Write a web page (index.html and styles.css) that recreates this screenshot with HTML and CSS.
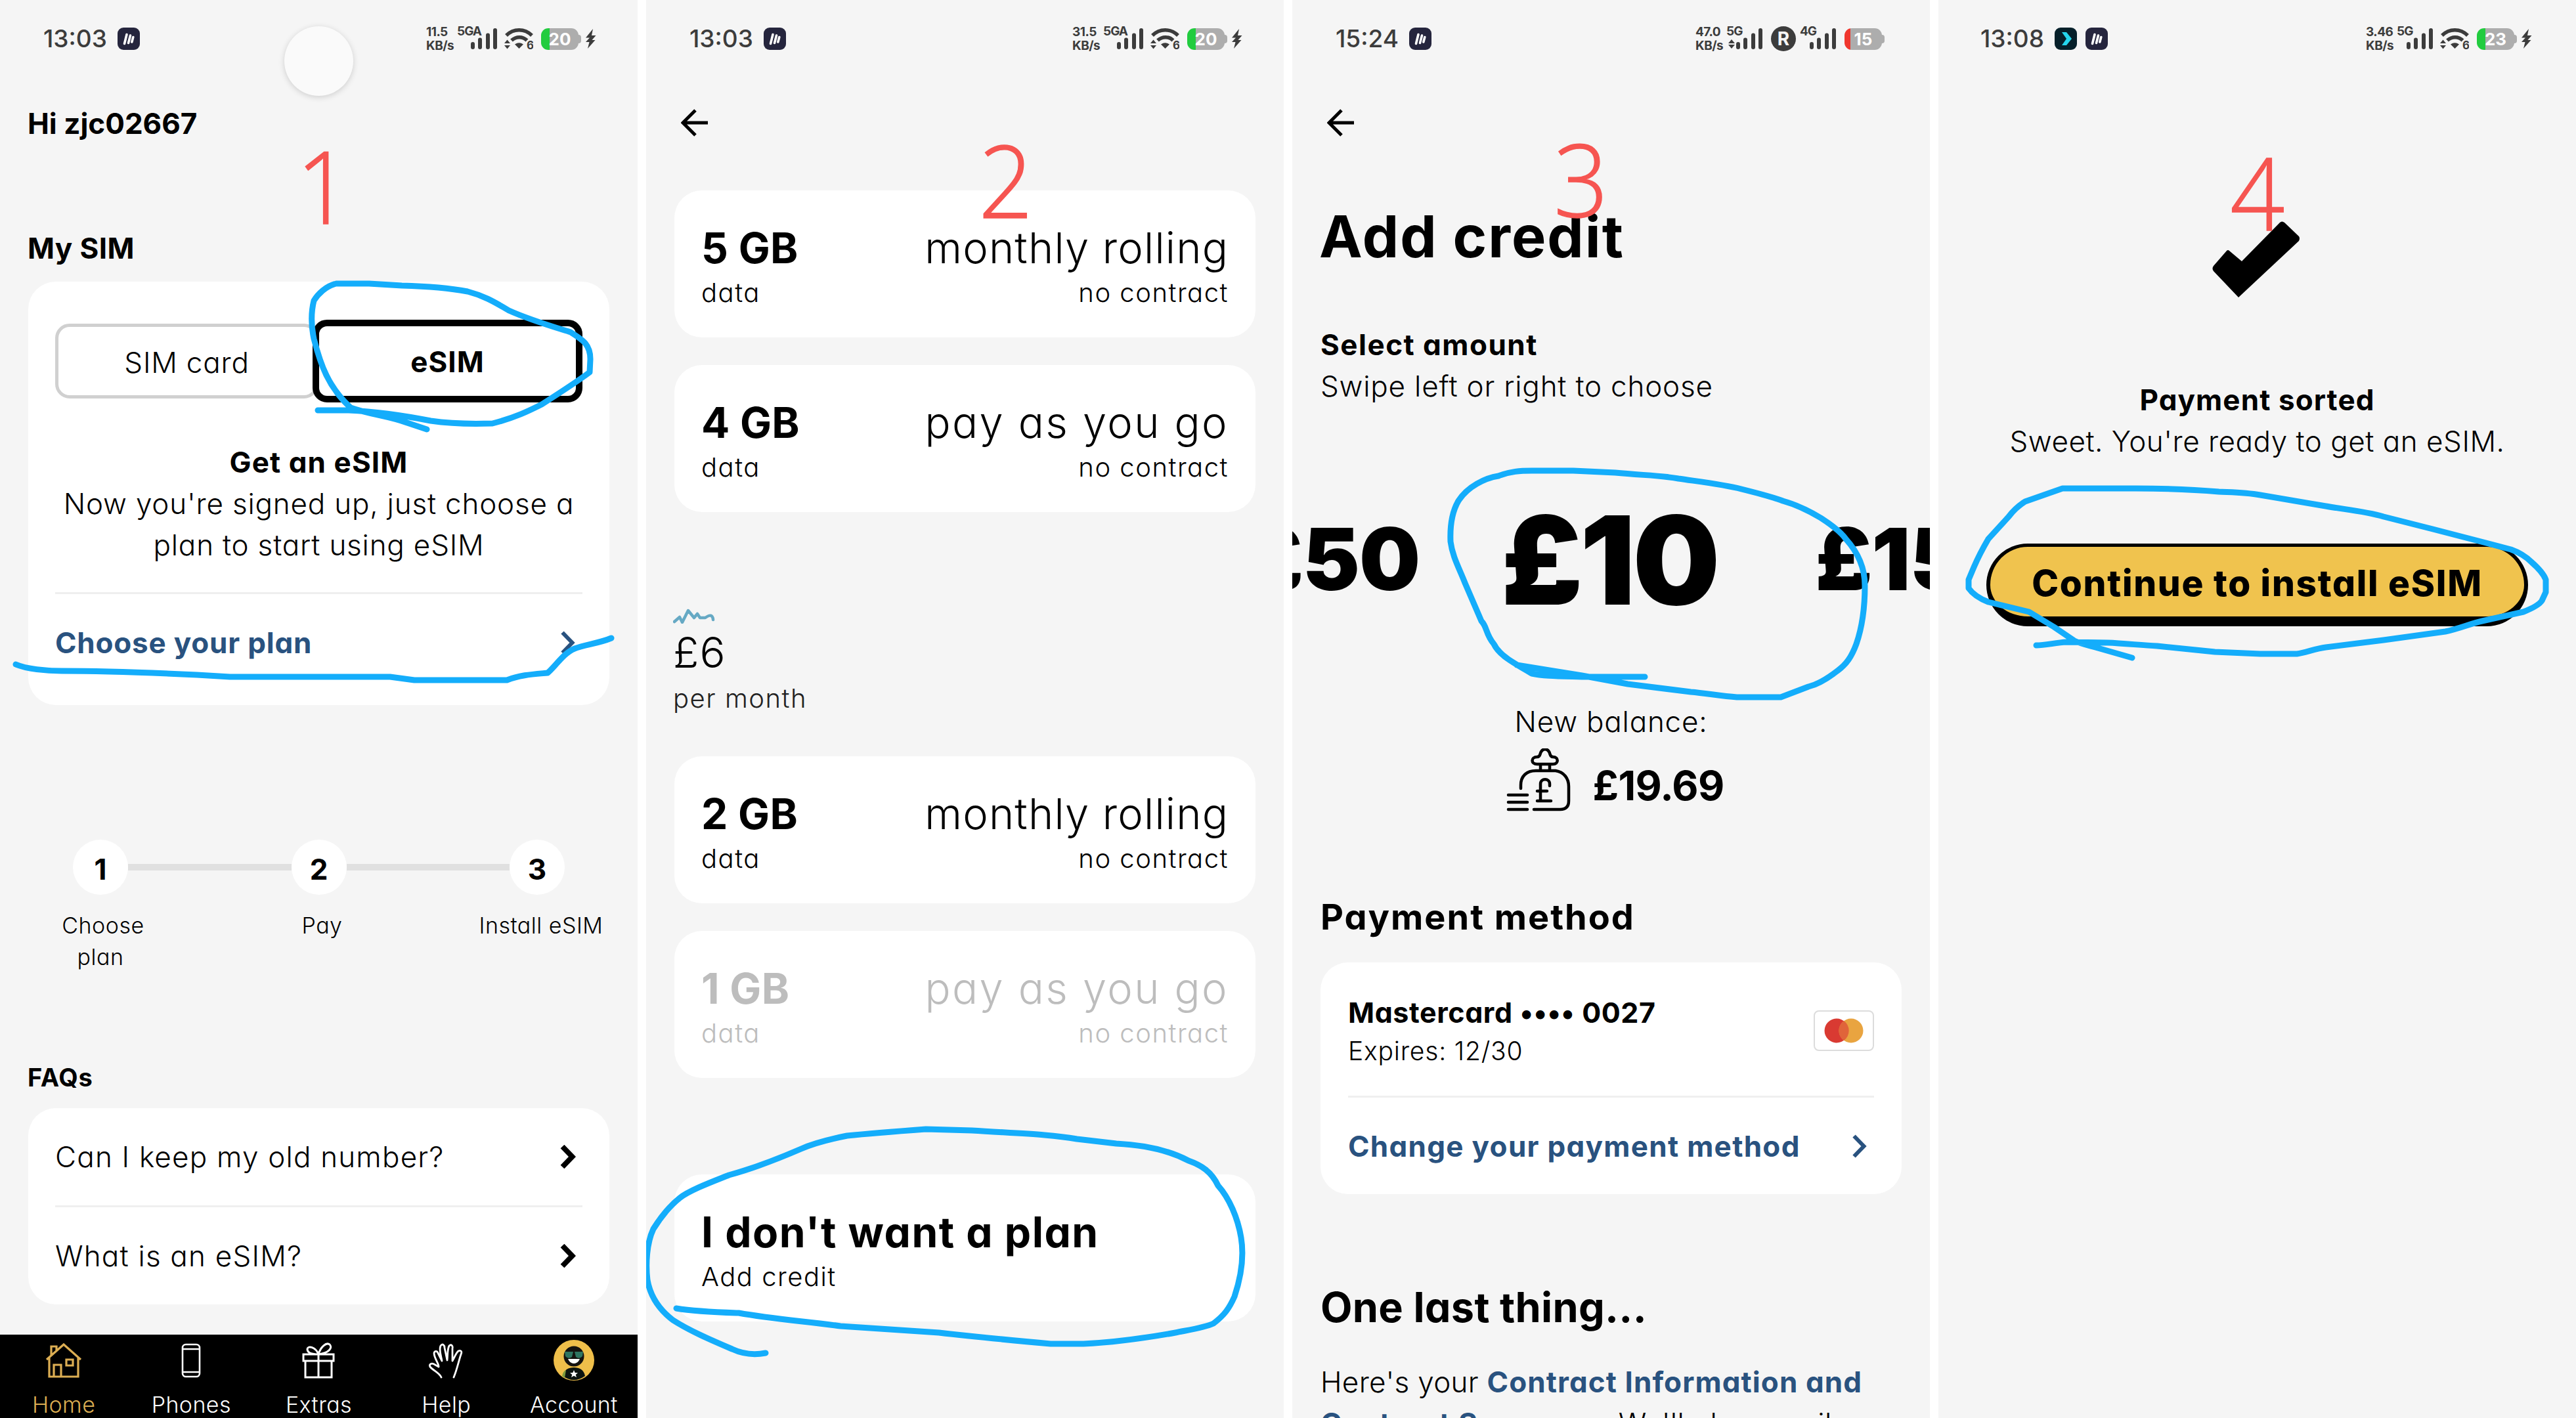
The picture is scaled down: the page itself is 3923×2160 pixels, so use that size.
FILE: index.html
```html
<!DOCTYPE html>
<html lang="en">
<head>
  <meta charset="UTF-8">
  <title>eSIM sign up steps</title>
  <meta name="viewport" content="width=device-width, initial-scale=1">
  <link rel="stylesheet" href="styles.css">
</head>
<body>
  <!-- shared icons -->
  <svg class="defs" aria-hidden="true">
    <symbol id="app" viewBox="0 0 34 34">
      <rect width="34" height="34" rx="9" fill="#25253d"/>
      <path d="M10.500 24.500 14 10.500M16.500 23.500 19.500 12M21.800 22 23.800 14.500" stroke="#fff" stroke-width="3.600" stroke-linecap="round"/>
    </symbol>
    <symbol id="bars" viewBox="0 0 40 32">
      <path d="M3 24V29M14 17.500V29M26 10.500V29M37 3V29" stroke="#3c3c3c" stroke-width="6" stroke-linecap="round"/>
    </symbol>
    <symbol id="wifi" viewBox="0 0 44 34">
      <path d="M3 12C14 1 31 1 42 12M11 19.500C18 13 28 13 34.500 19.500" fill="none" stroke="#3c3c3c" stroke-width="5.500"/>
      <path d="M16 25.500Q22.500 21 29 25.500L22.500 32Z M0 24 4.500 18.500 9 24Z M0 27 4.500 32.500 9 27Z" fill="#3c3c3c"/>
      <text x="34" y="33" class="tiny">6</text>
    </symbol>
    <symbol id="bolt" viewBox="0 0 17 30">
      <path d="M12 0 1 13.500H7L1 20H6.500L4 30 15.500 17H10.500L16.500 10H10Z" fill="#3c3c3c"/>
    </symbol>
    <symbol id="arrow" viewBox="0 0 42 42">
      <path d="M22 2 3 21 22 40M3 21H41" fill="none" stroke="#000" stroke-width="5"/>
    </symbol>
    <symbol id="chevron" viewBox="0 0 24 36">
      <path d="M3.500 2.500 18.500 18 3.500 33.500" fill="none" stroke="currentColor"/>
    </symbol>
  </svg>

  <div class="board">

    <!-- 1: home -->
    <section class="screen">
      <div class="status">
        <span class="time">13:03</span>
        <svg class="app"><use href="#app"/></svg>
        <span class="speed">11.5<br>KB/s</span>
        <span class="signal signal-5ga"><b>5GA</b><svg><use href="#bars"/></svg></span>
        <svg class="wifi"><use href="#wifi"/></svg>
        <span class="battery green">20</span>
        <svg class="bolt"><use href="#bolt"/></svg>
      </div>
      <span class="camera"></span>

      <h2 class="hello">Hi zjc02667</h2>
      <h2 class="my-sim">My SIM</h2>

      <div class="card sim-card">
        <div class="segment">
          <div class="option">SIM card</div>
          <div class="option active">eSIM</div>
        </div>
        <p class="bold center">Get an eSIM</p>
        <p class="center">Now you're signed up, just choose a<br>plan to start using eSIM</p>
        <hr class="sim-rule">
        <a class="row link">Choose your plan<svg class="chevron"><use href="#chevron"/></svg></a>
      </div>

      <div class="steps">
        <b>1</b><i></i><b>2</b><i></i><b>3</b>
      </div>
      <div class="step-labels">
        <span>Choose<br><span class="step-plan">plan</span></span>
        <span class="step-pay">Pay</span>
        <span>Install eSIM</span>
      </div>

      <h3 class="faq-title">FAQs</h3>
      <div class="card faq">
        <div class="row">Can I keep my old number?<svg class="chevron"><use href="#chevron"/></svg></div>
        <hr>
        <div class="row">What is an eSIM?<svg class="chevron"><use href="#chevron"/></svg></div>
      </div>

      <nav class="tabs">
        <a class="tab current">
          <svg viewBox="0 0 56 56" fill="none" stroke="currentColor" stroke-width="3.200"><path d="M2 27 28 4 54 27M6 24V53H50V24M9 20V7H17V13M13 53V35H24V53M32 27H42V36H32Z"/></svg>
          Home
        </a>
        <a class="tab">
          <svg viewBox="0 0 56 56" fill="none" stroke="currentColor" stroke-width="2.600"><rect x="15" y="4" width="26" height="49" rx="5"/><path d="M15 11H41M15 46H41"/></svg>
          Phones
        </a>
        <a class="tab">
          <svg viewBox="0 0 56 56" fill="none" stroke="currentColor" stroke-width="3"><path d="M5 19H51V29H5ZM8 29V54H48V29M28 19V54M28 19C19 19 11 17 11 11 12 5 24 8 28 19 31 8 40 0 45 4 50 9 44 17 28 19Z"/></svg>
          Extras
        </a>
        <a class="tab">
          <svg viewBox="0 0 56 56" fill="none" stroke="currentColor" stroke-width="2.800" stroke-linecap="round" stroke-linejoin="round"><path d="M20 54C17 47 8 44 3 38 1 34 5 32 9 34L16 38C17 34 9 25 9 17 10 13 14 14 15 17L21 29C20 22 16 12 19 6 22 2 25 5 25 9L29 28C30 20 29 12 32 6 35 3 38 6 37 10L37 29C40 24 43 16 46 14 50 12 52 15 50 19 46 31 44 42 39 54"/></svg>
          Help
        </a>
        <a class="tab">
          <svg class="avatar" viewBox="0 0 62 62">
            <circle cx="31" cy="31" r="31" fill="#efbf4a"/>
            <path d="M14 55C16 45 23 42 31 42S46 45 48 55Q31 67 14 55Z" fill="#0c1410"/>
            <path d="M13 55C14 50 16 47 19 46L17 58Z" fill="#7f9a3c"/>
            <circle cx="31" cy="25" r="15.500" fill="#15130f"/>
            <path d="M17 18H30L28 26Q23 30 18 25ZM32 18H45L44 25Q39 30 34 26Z" fill="#2f7561"/>
            <path d="M22 29H40Q37 36 31 36T22 29Z" fill="#fff"/>
            <path d="M31 46 32.700 50 37 50.200 33.700 53 35 57 31 54.700 27 57 28.300 53 25 50.200 29.300 50Z" fill="#fff"/>
          </svg>
          Account
        </a>
      </nav>

      <svg class="marker" viewBox="0 0 971 2160">
        <path d="M484 625H531C575 627 615 633 656 641 690 646 720 646 750 645 785 636 805 626 825 616 850 600 878 582 898 567L899 547C899 525 888 518 869 506 840 497 806 487 775 473 750 458 735 450 712 444 680 438 648 436 612 435L562 432H512C496 436 484 448 478 458 473 478 474 497 478 516 488 555 500 590 534 621 565 632 590 633 620 644L650 654"/>
        <path d="M24 1012C40 1019 70 1022 94 1022 160 1022 235 1025 300 1028L350 1031H594L631 1036H772C792 1028 812 1027 834 1025 846 1015 858 995 875 988 890 982 912 980 931 972"/>
      </svg>
      <span class="number n1">1</span>
    </section>

    <!-- 2: plans -->
    <section class="screen">
      <div class="status">
        <span class="time">13:03</span>
        <svg class="app"><use href="#app"/></svg>
        <span class="speed">31.5<br>KB/s</span>
        <span class="signal signal-5ga"><b>5GA</b><svg><use href="#bars"/></svg></span>
        <svg class="wifi"><use href="#wifi"/></svg>
        <span class="battery green">20</span>
        <svg class="bolt"><use href="#bolt"/></svg>
      </div>
      <div class="back"><svg><use href="#arrow"/></svg></div>

      <div class="card plan">
        <div><strong>5 GB</strong><small>data</small></div>
        <div class="term"><em>monthly rolling</em><small>no contract</small></div>
      </div>
      <div class="card plan">
        <div><strong>4 GB</strong><small>data</small></div>
        <div class="term payg"><em>pay as you go</em><small>no contract</small></div>
      </div>

      <div class="price">
        <svg class="squiggle" viewBox="0 0 64 23"><path d="M2 20 10 13 14 21 23 3 32 14 37 8 41 14 49 14Q60 6 61 17" fill="none" stroke="#66a9c4" stroke-width="4.500" stroke-linecap="round" stroke-linejoin="round"/></svg>
        <em>£6</em>
        <small>per month</small>
      </div>

      <div class="card plan">
        <div><strong>2 GB</strong><small>data</small></div>
        <div class="term"><em>monthly rolling</em><small>no contract</small></div>
      </div>
      <div class="card plan sold-out">
        <div><strong>1 GB</strong><small>data</small></div>
        <div class="term payg"><em>pay as you go</em><small>no contract</small></div>
      </div>

      <div class="card plan no-plan">
        <div><strong>I don't want a plan</strong><small>Add credit</small></div>
      </div>

      <svg class="marker" viewBox="984 0 971 2160">
        <path d="M1030 1993C1060 1998 1095 1999 1125 2000 1175 2009 1230 2013 1280 2020L1430 2030C1490 2037 1545 2042 1600 2047H1650C1695 2045 1745 2038 1790 2030 1815 2025 1835 2022 1848 2016 1865 2003 1872 1993 1880 1975 1890 1945 1895 1915 1890 1885 1885 1855 1872 1825 1855 1806 1845 1785 1830 1775 1810 1768 1780 1752 1740 1744 1700 1742L1640 1735C1600 1728 1560 1727 1480 1722L1410 1720C1370 1723 1330 1726 1290 1730 1260 1736 1240 1741 1220 1750 1190 1763 1150 1779 1110 1790 1085 1800 1050 1813 1035 1825 1020 1837 1005 1856 995 1872 985 1893 983 1925 986 1950 991 1978 1008 1998 1025 2011 1050 2027 1080 2040 1115 2055 1130 2062 1145 2065 1166 2061"/>
      </svg>
      <span class="number n2">2</span>
    </section>

    <!-- 3: add credit -->
    <section class="screen">
      <div class="status">
        <span class="time">15:24</span>
        <svg class="app"><use href="#app"/></svg>
        <span class="speed">47.0<br>KB/s</span>
        <span class="signal"><b>5G</b><svg viewBox="0 0 10 14" class="updown"><path d="M0 6 5 0 10 6ZM0 8 5 14 10 8Z" fill="#3c3c3c"/></svg><svg><use href="#bars"/></svg></span>
        <span class="roaming">R</span>
        <span class="signal"><b>4G</b><svg><use href="#bars"/></svg></span>
        <span class="battery red">15</span>
      </div>
      <div class="back"><svg><use href="#arrow"/></svg></div>

      <h1>Add credit</h1>
      <p class="bold select">Select amount</p>
      <p>Swipe left or right to choose</p>

      <div class="amounts">
        <span>£50</span>
        <b>£10</b>
        <span>£15</span>
      </div>

      <p class="center balance-label">New balance:</p>
      <div class="balance">
        <svg viewBox="0 0 98 96" fill="none" stroke="#000" stroke-width="4.500" stroke-linecap="round" stroke-linejoin="round">
          <path d="M22 61V56C22 42 31 34 45 34H75C88 36 95 46 95 58V80C95 89 90 93 82 93H42M52 33V25M66 33V25M47 24H71C80 24 80 13 71 13 66 13 67 8 65 5 62 0 56 0 53 5 51 8 52 13 47 13 37 13 37 24 47 24M3 71H32M3 82H32M3 93H32"/>
          <path d="M66 57V54C66 45 52 45 52 54V78M47 65H62M47 80H68"/>
        </svg>
        <strong>£19.69</strong>
      </div>

      <h2 class="pay-title">Payment method</h2>
      <div class="card pay">
        <div class="pay-top">
          <div>
            <p class="bold brand">Mastercard •••• 0027</p>
            <p class="expires">Expires: 12/30</p>
          </div>
          <svg class="mc" viewBox="0 0 92 62">
            <rect x="1" y="1" width="90" height="60" rx="7" fill="#fff" stroke="#dcdcdc" stroke-width="2"/>
            <circle cx="35" cy="31" r="18.500" fill="#d93a32"/>
            <circle cx="57" cy="31" r="18.500" fill="#e9a440"/>
            <path d="M46 16A18.500 18.500 0 0 1 46 46 18.500 18.500 0 0 1 46 16Z" fill="#e0643a"/>
          </svg>
        </div>
        <hr>
        <a class="row link">Change your payment method<svg class="chevron"><use href="#chevron"/></svg></a>
      </div>

      <h2 class="last-title">One last thing...</h2>
      <p class="legal">Here's your <b class="blue">Contract Information and<br>Contract Summary.</b> We'll also email</p>

      <svg class="marker" viewBox="1968 0 971 2160">
        <path d="M2505 1031H2409C2375 1030 2350 1030 2333 1026 2305 1010 2283 998 2275 981 2262 965 2265 955 2256 946L2231 888C2222 865 2212 848 2209 825 2208 800 2211 780 2221 763 2235 741 2262 728 2282 725 2300 718 2315 717 2333 717H2396L2460 720C2500 724 2530 724 2556 729 2590 734 2625 738 2652 745 2680 752 2700 757 2715 763 2740 770 2758 780 2773 789 2790 800 2803 810 2811 821 2830 842 2840 865 2840 892 2840 925 2836 955 2827 981 2820 1000 2812 1012 2798 1022 2785 1032 2770 1042 2754 1046L2712 1062H2645C2620 1060 2598 1056 2575 1054L2479 1042 2409 1029 2310 1013"/>
      </svg>
      <span class="number n3">3</span>
    </section>

    <!-- 4: payment sorted -->
    <section class="screen">
      <div class="status status-4">
        <span class="time">13:08</span>
        <svg class="app" viewBox="0 0 34 34"><rect width="34" height="34" rx="9" fill="#06202a"/><path d="M11 7H18L26 17 18 27H11L18 17Z" fill="#25d5ec"/></svg>
        <svg class="app"><use href="#app"/></svg>
        <span class="speed">3.46<br>KB/s</span>
        <span class="signal"><b>5G</b><svg><use href="#bars"/></svg></span>
        <svg class="wifi"><use href="#wifi"/></svg>
        <span class="battery green">23</span>
        <svg class="bolt"><use href="#bolt"/></svg>
      </div>

      <svg class="tick" viewBox="0 0 134 118"><path d="M26 46 45 62 103 3Q106 0 110 3L132 24Q134 27 132 31L40 117 2 77Q-1 73 2 69L22 46Q24 44 26 46Z"/></svg>
      <p class="bold center">Payment sorted</p>
      <p class="center sweet">Sweet. You're ready to get an eSIM.</p>
      <button class="cta">Continue to install eSIM</button>

      <svg class="marker" viewBox="2952 0 971 2160">
        <path d="M3101 983C3115 983 3130 979 3147 978L3210 979C3235 980 3262 983 3285 984L3373 993 3442 996H3498C3512 994 3526 988 3542 986L3630 975 3724 962C3745 958 3762 950 3780 946L3843 932C3858 926 3868 920 3871 915L3877 902V883C3873 872 3863 863 3855 856 3845 846 3835 841 3824 837L3786 827 3705 806 3630 787C3600 778 3568 776 3536 770L3442 754C3420 750 3400 750 3379 749 3335 745 3295 744 3253 744H3141L3084 764C3073 771 3065 779 3059 787L3028 821C3018 838 3012 850 3006 864L2998 883V896C3005 906 3015 912 3028 917L3090 932 3128 955 3159 976C3170 981 3180 983 3191 986L3247 1002"/>
      </svg>
      <span class="number n4">4</span>
    </section>
  </div>
</body>
</html>
```
FILE: styles.css
```css
* {
  box-sizing: border-box;
}
body {
  margin: 0;
  background: #fff;
  color: #000;
  font-family: 'Inter', 'Liberation Sans', sans-serif;
  font-feature-settings: 'cv11';
  font-size: 44px;
  font-weight: 300;
  line-height: 63px;
  letter-spacing: 0.8px;
}
h1, h2, h3, p {
  margin: 0;
}
b, strong {
  font-weight: 700;
}
em {
  font-style: normal;
}
svg {
  display: block;
}
.defs {
  position: absolute;
  width: 0;
  height: 0;
}
.board {
  display: grid;
  grid-template-columns: 971px 971px 971px 971px;
  column-gap: 13px;
  height: 2160px;
  overflow: hidden;
}
.screen {
  position: relative;
  display: flex;
  flex-direction: column;
  height: 2160px;
  padding: 0 43px;
  background: #f5f5f5;
  overflow: hidden;
}
.bold {
  font-weight: 700;
  letter-spacing: 1.1px;
}
.center {
  text-align: center;
}
.card {
  flex: none;
  background: #fff;
  border-radius: 42px;
}
hr {
  height: 3px;
  margin: 0;
  border: 0;
  background: #efefef;
}
.row {
  display: flex;
  align-items: center;
  justify-content: space-between;
  height: 148px;
}
.chevron {
  width: 24px;
  height: 36px;
  margin-right: 10px;
  stroke-width: 8px;
}
.link, .blue {
  color: #29527f;
  font-weight: 700;
}
.link .chevron {
  stroke-width: 6px;
}

/* status bar */
.status {
  display: flex;
  align-items: center;
  flex: none;
  height: 118px;
  padding: 0 20px 0 23px;
  color: #3c3c3c;
  line-height: 34px;
  letter-spacing: 0;
}
.time {
  font-size: 37px;
  font-weight: 500;
  margin-right: 16px;
}
.app {
  width: 34px;
  height: 34px;
  margin-right: 13px;
}
.speed {
  margin-left: auto;
  width: 47px;
  font-size: 19px;
  font-weight: 700;
  line-height: 21px;
  letter-spacing: -0.5px;
}
.signal {
  position: relative;
  display: flex;
  justify-content: flex-end;
  width: 55px;
}
.signal-5ga {
  width: 61px;
}
.signal svg {
  width: 40px;
  height: 32px;
}
.signal b {
  position: absolute;
  left: 0;
  top: -4px;
  font-size: 19px;
  line-height: 18px;
  letter-spacing: -1px;
}
.signal .updown {
  width: 10px;
  height: 14px;
  margin: 17px 2px 0 0;
}
.wifi {
  width: 44px;
  height: 34px;
  margin: 0 12px 0 11px;
}
.tiny {
  font-size: 17px;
  font-weight: 700;
  fill: #3c3c3c;
}
.battery {
  position: relative;
  width: 57px;
  height: 33px;
  margin-right: 10px;
  border-radius: 11px;
  color: #fff;
  font-size: 26px;
  font-weight: 700;
  text-align: center;
}
.battery::after {
  content: '';
  position: absolute;
  right: -4px;
  top: 10px;
  width: 5px;
  height: 13px;
  border-radius: 0 4px 4px 0;
  background: #adadad;
}
.green {
  background: linear-gradient(90deg, #22cc3f 13px, #adadad 13px);
}
.red {
  margin-left: 13px;
  background: linear-gradient(90deg, #f0372e 9px, #adadad 9px);
}
.bolt {
  width: 17px;
  height: 30px;
}
.roaming {
  width: 38px;
  height: 38px;
  margin: 0 6px 0 13px;
  border-radius: 50%;
  background: #3c3c3c;
  color: #f5f5f5;
  font-size: 28px;
  font-weight: 700;
  line-height: 38px;
  text-align: center;
}
.status-4 {
  padding: 0 24px 0 21px;
}
.camera {
  position: absolute;
  left: 433px;
  top: 40px;
  width: 105px;
  height: 106px;
  border-radius: 50%;
  background: #fafafa;
  box-shadow: 0 2px 10px rgba(0,0,0,0.16);
}

/* home */
.hello, .my-sim {
  margin-left: -1px;
  font-size: 44px;
  letter-spacing: 0;
}
.hello {
  margin-top: 39px;
}
.my-sim {
  margin-top: 127px;
  letter-spacing: 0.4px;
}
.sim-card {
  height: 645px;
  margin-top: 19px;
  padding: 58px 41px 0;
}
.segment {
  display: flex;
  align-items: center;
  height: 126px;
  margin-bottom: 60px;
}
.option {
  width: 401px;
  height: 114px;
  border: 5px solid #d0d0d0;
  border-radius: 22px;
  line-height: 108px;
  text-align: center;
}
.option.active {
  width: 411px;
  height: 126px;
  margin-left: -9px;
  border: 10px solid #000;
  background: #fff;
  font-weight: 700;
  letter-spacing: 1px;
}
.sim-rule {
  margin-top: 40px;
}
.steps {
  display: flex;
  align-items: center;
  margin-top: 205px;
  padding: 0 68px;
  letter-spacing: 0;
}
.steps b {
  width: 84px;
  height: 84px;
  border-radius: 50%;
  background: #fff;
  line-height: 90px;
  text-align: center;
}
.steps i {
  flex: 1;
  height: 10px;
  background: #e0e0e0;
}
.step-labels {
  display: grid;
  grid-template-columns: 154px 1fr 194px;
  margin: 23px 7px 0 37px;
  font-size: 34px;
  line-height: 48px;
  letter-spacing: 0.5px;
  text-align: center;
}
.step-plan {
  margin-right: 8px;
}
.step-pay {
  margin-left: 20px;
}
.faq-title {
  margin: 135px 0 0 -1px;
  font-size: 38px;
  line-height: 48px;
  letter-spacing: 0.8px;
}
.faq {
  margin-top: 23px;
  padding: 0 41px;
  letter-spacing: 1.2px;
}
.tabs {
  display: grid;
  grid-template-columns: repeat(5, 1fr);
  height: 127px;
  margin: auto -43px 0;
  background: #000;
  color: #fff;
}
.tab {
  display: flex;
  flex-direction: column;
  align-items: center;
  padding-top: 11px;
  font-size: 34px;
  line-height: 44px;
  letter-spacing: 0.4px;
}
.tab svg {
  width: 56px;
  height: 56px;
  margin-bottom: 18px;
}
.tab .avatar {
  width: 62px;
  height: 62px;
  margin: -3px 0 15px;
}
.current {
  color: #dcae53;
}

/* plans */
.back {
  flex: none;
  height: 172px;
  padding: 48px 10px 0;
}
.back svg {
  width: 42px;
  height: 42px;
}
.plan {
  display: flex;
  justify-content: space-between;
  height: 224px;
  margin-bottom: 42px;
  padding: 52px 41px 0;
}
.plan strong, .plan em, .price em {
  display: block;
  font-size: 65px;
  line-height: 72px;
  letter-spacing: 1.2px;
}
.plan strong {
  font-size: 64px;
  letter-spacing: 0.3px;
}
.plan small, .price small {
  display: block;
  font-size: 40px;
  line-height: 64px;
  letter-spacing: 1.5px;
}
.term {
  text-align: right;
}
.plan.plan .payg em {
  letter-spacing: 2.4px;
}
.price {
  margin: 105px 0 56px -2px;
}
.price small {
  margin-top: 2px;
  color: #222;
}
.squiggle {
  width: 64px;
  height: 23px;
  margin-bottom: 8px;
}
.sold-out {
  color: #bdbdbd;
}
.no-plan {
  margin-top: 105px;
}
.no-plan strong {
  letter-spacing: 1.5px;
}

/* add credit */
h1 {
  margin: 20px 0 0 -2px;
  font-size: 88px;
  line-height: 100px;
  letter-spacing: 2px;
}
.select {
  margin-top: 84px;
  letter-spacing: 1.5px;
}
.amounts {
  display: flex;
  flex: none;
  align-items: center;
  gap: 124px;
  height: 220px;
  margin: 123px 0 0 -113px;
  font-size: 131px;
  font-weight: 900;
  letter-spacing: -1px;
}
.amounts span {
  margin-top: -4px;
}
.amounts b {
  margin-right: 25px;
  font-size: 187px;
  font-weight: 900;
  letter-spacing: -4px;
}
.balance-label {
  margin-top: 105px;
}
.balance {
  display: flex;
  flex: none;
  justify-content: center;
  gap: 34px;
  height: 96px;
  margin-top: 9px;
  padding-left: 12px;
  font-size: 62px;
  letter-spacing: -0.7px;
}
.balance svg {
  width: 98px;
  height: 96px;
}
.balance strong {
  padding-top: 25px;
}
.pay-title {
  margin-top: 126px;
  font-size: 54px;
  line-height: 70px;
  letter-spacing: 2px;
}
.pay {
  height: 353px;
  margin-top: 34px;
  padding: 45px 42px 0;
}
.pay-top {
  display: flex;
  align-items: center;
  justify-content: space-between;
  margin-bottom: 41px;
}
.brand {
  font-size: 43px;
  letter-spacing: 0.6px;
}
.expires {
  font-size: 39px;
  line-height: 54px;
}
.mc {
  width: 92px;
  height: 62px;
}
.pay .link {
  letter-spacing: 1.3px;
}
.last-title {
  margin-top: 132px;
  font-size: 63px;
  line-height: 80px;
  letter-spacing: 0.3px;
}
.legal {
  margin-top: 43px;
  letter-spacing: 0.3px;
  white-space: nowrap;
}
.legal b {
  letter-spacing: 1.1px;
}

/* payment sorted */
.tick {
  width: 134px;
  height: 118px;
  margin: 218px 0 124px 374px;
}
.sweet {
  letter-spacing: 0.5px;
}
.cta {
  height: 126px;
  margin: 124px 30px 0;
  padding: 4px 0 0;
  border: solid #000;
  border-width: 5px 6px 15px;
  border-radius: 63px;
  background: #f0c34e;
  color: #000;
  font: 800 55px 'Inter', sans-serif;
  font-feature-settings: 'cv11';
  letter-spacing: 1.7px;
}

/* hand-drawn marks */
.marker {
  position: absolute;
  left: 0;
  top: 0;
  width: 971px;
  height: 2160px;
  fill: none;
  stroke: #14adfb;
  stroke-width: 9px;
  stroke-linecap: round;
  stroke-linejoin: round;
}
.number {
  position: absolute;
  color: #f65551;
  font: 300 153px/150px 'Open Sans', sans-serif;
  letter-spacing: 0;
  transform: scaleX(0.95);
  -webkit-text-stroke: 1.5px #f65551;
}
.n1 {
  left: 449px;
  top: 207px;
}
.n2 {
  left: 504px;
  top: 198px;
}
.n3 {
  left: 396px;
  top: 197px;
}
.n4 {
  left: 442px;
  top: 217px;
}
```
